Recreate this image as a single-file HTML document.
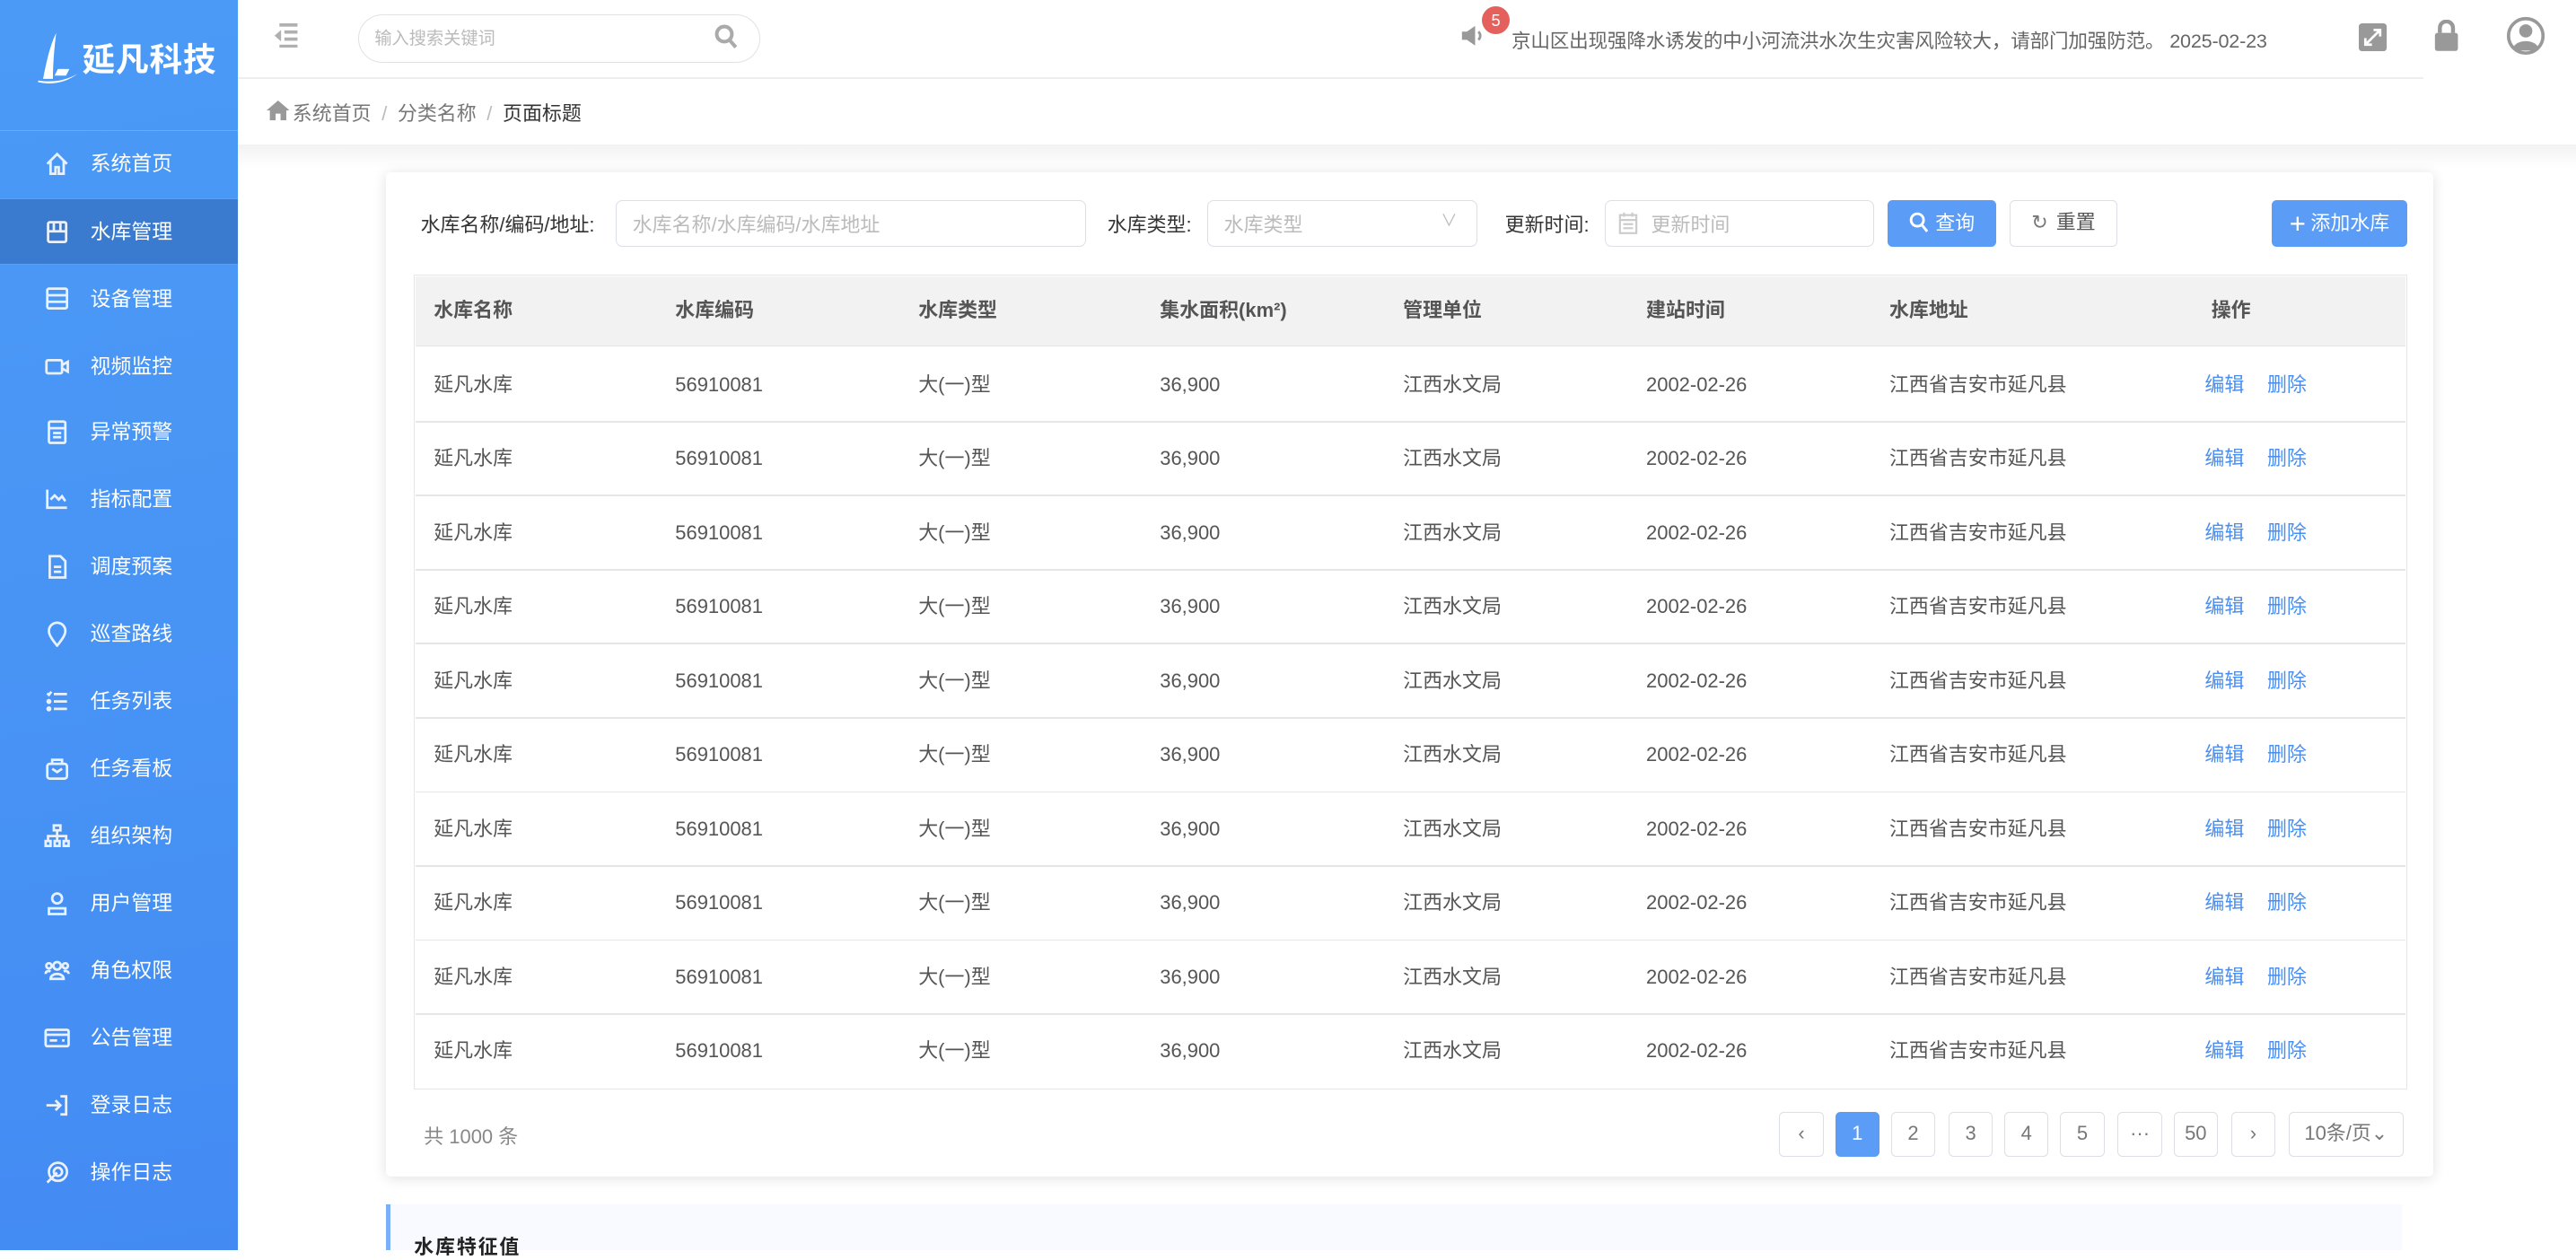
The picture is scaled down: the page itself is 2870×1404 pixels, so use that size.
<!DOCTYPE html>
<html><head><meta charset="utf-8">
<style>
html{zoom:1.8304}
*{box-sizing:border-box;margin:0;padding:0}
body{width:1568px;height:761px;overflow:hidden;background:#fff;font-family:"Liberation Sans","Noto Sans CJK SC",sans-serif;color:#333;position:relative;font-size:12px}
.a{position:absolute}
.side{left:0;top:0;width:145px;height:761px;background:linear-gradient(170deg,#4b9af6 0%,#4894f5 50%,#438bf3 100%)}
.logo{left:0;top:0;width:145px;height:80px;border-bottom:1px solid #6aabf7}
.mi{left:0;width:145px;height:40px;color:#fff;font-size:12.5px;line-height:40px}
.mi span{position:absolute;left:55px}
.mi svg{position:absolute;left:27px;top:12px;width:16px;height:16px}
.mi.on{background:#3a7bd0;border-top:1px solid #5aa0f5;border-bottom:1px solid #5aa0f5}
.box{border:1px solid #dcdfe6;border-radius:4px;background:#fff}
.ph{color:#bbb;font-size:12px}
.lab{font-size:12px;color:#333}
.btn{border-radius:3px;font-size:12px;text-align:center;line-height:28px}
.th,.td{font-size:12px;position:absolute;line-height:14px}
.th{font-weight:bold;color:#555}
.td{color:#555}
.pg{top:677px;width:27px;height:27px;border:1px solid #dcdfe6;border-radius:3px;text-align:center;line-height:25px;font-size:12px;color:#777;background:#fff}
</style></head><body>
<div class="a side">
 <div class="a logo">
  <svg class="a" style="left:20px;top:18px" width="30" height="34" viewBox="0 0 30 34"><path d="M14 2 C10 10 8 20 6 30 L12 30 C12 20 13 10 14 2Z" fill="#fff"/><path d="M3 31 C10 32 18 32 27 27 C20 32 12 34 3 32Z" fill="#fff"/><path d="M15 24 L22 24 L20 28 L13 28Z" fill="#fff"/></svg>
  <div class="a" style="left:50px;top:20px;font-size:20px;font-weight:bold;color:#fff;letter-spacing:0.5px">延凡科技</div>
 </div>
 <div class="a mi" style="top:80px"><svg viewBox="0 0 16 16" fill="none" stroke="#e8f1ff" stroke-width="1.5"><path d="M2 8 L8 2 L14 8 M4 6.5 V14 H7 V10 H9 V14 H12 V6.5"/></svg><span>系统首页</span></div>
 <div class="a mi on" style="top:121px"><svg viewBox="0 0 16 16" fill="none" stroke="#e8f1ff" stroke-width="1.5"><rect x="2.5" y="2" width="11" height="12" rx="1"/><path d="M2.5 7.5 H13.5 M6 2 V7.5 M10 2 V7.5"/></svg><span>水库管理</span></div>
 <div class="a mi" style="top:162px"><svg viewBox="0 0 16 16" fill="none" stroke="#e8f1ff" stroke-width="1.5"><rect x="2" y="2" width="12" height="12" rx="1"/><path d="M2 6 H14 M2 10 H14"/></svg><span>设备管理</span></div>
 <div class="a mi" style="top:203px"><svg viewBox="0 0 16 16" fill="none" stroke="#e8f1ff" stroke-width="1.5"><rect x="1.5" y="4" width="9.5" height="8" rx="1"/><path d="M11 7 L14.5 5 V11 L11 9"/></svg><span>视频监控</span></div>
 <div class="a mi" style="top:243px"><svg viewBox="0 0 16 16" fill="none" stroke="#e8f1ff" stroke-width="1.5"><rect x="3" y="1.5" width="10" height="13" rx="1"/><path d="M3 5.5 H13 M5.5 8.5 H10.5 M5.5 11 H10.5"/></svg><span>异常预警</span></div>
 <div class="a mi" style="top:284px"><svg viewBox="0 0 16 16" fill="none" stroke="#e8f1ff" stroke-width="1.5"><path d="M2 2 V13 H14 M4 8 L6.5 5.5 L9 8 L11 6 L13 9"/></svg><span>指标配置</span></div>
 <div class="a mi" style="top:325px"><svg viewBox="0 0 16 16" fill="none" stroke="#e8f1ff" stroke-width="1.5"><path d="M3.5 1.5 H10 L13 4.5 V14.5 H3.5Z M6 8 H10.5 M6 11 H10.5"/></svg><span>调度预案</span></div>
 <div class="a mi" style="top:366px"><svg viewBox="0 0 16 16" fill="none" stroke="#e8f1ff" stroke-width="1.5"><path d="M8 15 C4 10 3 8 3 6 A5 5 0 0 1 13 6 C13 8 12 10 8 15Z"/></svg><span>巡查路线</span></div>
 <div class="a mi" style="top:407px"><svg viewBox="0 0 16 16" fill="none" stroke="#e8f1ff" stroke-width="1.5"><path d="M6 3.5 H14 M6 8 H14 M6 12.5 H14 M2 3 L3 4 L4.5 2"/><circle cx="3" cy="8" r=".8"/><circle cx="3" cy="12.5" r=".8"/></svg><span>任务列表</span></div>
 <div class="a mi" style="top:448px"><svg viewBox="0 0 16 16" fill="none" stroke="#e8f1ff" stroke-width="1.5"><rect x="2" y="5" width="12" height="9" rx="1.5"/><path d="M5 5 V2.5 H11 V5 M5 8 L8 10 L11 8"/></svg><span>任务看板</span></div>
 <div class="a mi" style="top:489px"><svg viewBox="0 0 16 16" fill="none" stroke="#e8f1ff" stroke-width="1.5"><rect x="6" y="1.5" width="4" height="3"/><rect x="1" y="11" width="3" height="3"/><rect x="6.5" y="11" width="3" height="3"/><rect x="12" y="11" width="3" height="3"/><path d="M8 4.5 V11 M2.5 11 V8 H13.5 V11"/></svg><span>组织架构</span></div>
 <div class="a mi" style="top:530px"><svg viewBox="0 0 16 16" fill="none" stroke="#e8f1ff" stroke-width="1.5"><circle cx="8" cy="5" r="3"/><path d="M3 14.5 V11 H13 V14.5Z"/></svg><span>用户管理</span></div>
 <div class="a mi" style="top:571px"><svg viewBox="0 0 16 16" fill="none" stroke="#e8f1ff" stroke-width="1.5"><circle cx="8" cy="5" r="2.3"/><circle cx="3" cy="5" r="1.6"/><circle cx="13" cy="5" r="1.6"/><path d="M4 13 C4 9 12 9 12 13Z M1 10 C1 8 3 8 4 8.5 M15 10 C15 8 13 8 12 8.5"/></svg><span>角色权限</span></div>
 <div class="a mi" style="top:612px"><svg viewBox="0 0 16 16" fill="none" stroke="#e8f1ff" stroke-width="1.5"><rect x="1" y="3" width="14" height="10" rx="1"/><path d="M1 6 H15 M3.5 9.5 H8 M11 9.5 H12.5"/></svg><span>公告管理</span></div>
 <div class="a mi" style="top:653px"><svg viewBox="0 0 16 16" fill="none" stroke="#e8f1ff" stroke-width="1.5"><path d="M1.5 8 H10 M7 5 L10 8 L7 11 M10 2.5 H13.5 V13.5 H10"/></svg><span>登录日志</span></div>
 <div class="a mi" style="top:694px"><svg viewBox="0 0 16 16" fill="none" stroke="#e8f1ff" stroke-width="1.5"><circle cx="8.5" cy="7.5" r="5.5"/><circle cx="8.5" cy="7.5" r="2.5"/><path d="M8 8 L2 14"/></svg><span>操作日志</span></div>
</div>

<svg class="a" style="left:166px;top:14px" width="16" height="15" viewBox="0 0 16 15" fill="#b0b0b0"><rect x="4" y="0" width="11" height="2"/><rect x="7" y="4.3" width="8" height="2"/><rect x="7" y="8.6" width="8" height="2"/><rect x="4" y="13" width="11" height="2"/><path d="M5 4 L1 7.5 L5 11Z"/></svg>
<div class="a box" style="left:218px;top:9px;width:245px;height:29px;border-radius:15px;border-color:#e2e2e2"></div>
<div class="a" style="left:228px;top:15px;color:#bbb;font-size:10.5px">输入搜索关键词</div>
<svg class="a" style="left:435px;top:15px" width="15" height="16" viewBox="0 0 15 16" fill="none" stroke="#aaa" stroke-width="2.2"><circle cx="6" cy="6" r="4.6"/><path d="M9.5 10 L13 14"/></svg>
<div class="a" style="left:145px;top:47px;width:1330px;height:1px;background:#eee"></div>
<svg class="a" style="left:889px;top:15px" width="16" height="14" viewBox="0 0 16 14" fill="#999"><path d="M1 4.5 H4 L9 1 V13 L4 9.5 H1Z"/><path d="M11 4.5 C12.5 6 12.5 8 11 9.5" stroke="#999" stroke-width="1.5" fill="none"/></svg>
<div class="a" style="left:902px;top:4px;width:17px;height:17px;border-radius:50%;background:#e5605c;color:#fff;font-size:10px;text-align:center;line-height:17px">5</div>
<div class="a" style="left:920px;top:16px;font-size:11.8px;color:#666;white-space:nowrap;letter-spacing:-0.1px">京山区出现强降水诱发的中小河流洪水次生灾害风险较大，请部门加强防范。 2025-02-23</div>
<svg class="a" style="left:1436px;top:14px" width="17" height="17" viewBox="0 0 17 17"><rect x="0" y="0" width="17" height="17" rx="2" fill="#999"/><path d="M4 13 L13 4 M9 4 H13 V8 M4 9 V13 H8" stroke="#fff" stroke-width="1.5" fill="none"/></svg>
<svg class="a" style="left:1481px;top:12px" width="16" height="19" viewBox="0 0 16 19"><path d="M4 8 V5 A4 4 0 0 1 12 5 V8" stroke="#999" stroke-width="2.4" fill="none"/><rect x="1" y="8" width="14" height="11" rx="1.5" fill="#999"/></svg>
<svg class="a" style="left:1526px;top:10px" width="23" height="24" viewBox="0 0 23 24"><circle cx="11.5" cy="12" r="10.5" fill="none" stroke="#999" stroke-width="2"/><circle cx="11.5" cy="9" r="4" fill="#999"/><path d="M4 19 C6 14 17 14 19 19 L16 21 H7Z" fill="#999"/></svg>

<svg class="a" style="left:162px;top:61px" width="14" height="12" viewBox="0 0 14 12" fill="#999"><path d="M7 0 L14 6 H12 V12 H8.5 V8 H5.5 V12 H2 V6 H0Z"/></svg>
<div class="a" style="left:178px;top:60px;font-size:12px;color:#777;white-space:nowrap">系统首页 <span style="color:#bbb;margin:0 3px">/</span> 分类名称 <span style="color:#bbb;margin:0 3px">/</span> <span style="color:#333">页面标题</span></div>
<div class="a" style="left:145px;top:88px;width:1423px;height:14px;background:linear-gradient(#f2f2f2,#fff)"></div>

<div class="a" style="left:235px;top:105px;width:1246px;height:611px;background:#fff;border-radius:3px;box-shadow:0 1px 8px rgba(0,0,0,0.12)"></div>
<div class="a lab" style="left:256px;top:128px">水库名称/编码/地址:</div>
<div class="a box" style="left:375px;top:122px;width:286px;height:28px"></div>
<div class="a ph" style="left:385px;top:128px">水库名称/水库编码/水库地址</div>
<div class="a lab" style="left:674px;top:128px">水库类型:</div>
<div class="a box" style="left:735px;top:122px;width:164px;height:28px"></div>
<div class="a ph" style="left:745px;top:128px">水库类型</div>
<div class="a" style="left:877px;top:127px;color:#bbb;font-size:10px">∨</div>
<div class="a lab" style="left:916px;top:128px">更新时间:</div>
<div class="a box" style="left:977px;top:122px;width:164px;height:28px"></div>
<svg class="a" style="left:985px;top:129px" width="12" height="14" viewBox="0 0 12 14" fill="none" stroke="#ccc" stroke-width="1.2"><rect x="1" y="2" width="10" height="11"/><path d="M1 5 H11 M3.5 0.5 V3 M8.5 0.5 V3 M3 7.5 H9 M3 10 H9"/></svg>
<div class="a ph" style="left:1005px;top:128px">更新时间</div>
<div class="a btn" style="left:1149px;top:122px;width:66px;height:28px;background:#5b9cf6;color:#fff"><svg width="12" height="13" viewBox="0 0 12 13" style="vertical-align:-2px;margin-right:4px" fill="none" stroke="#fff" stroke-width="1.6"><circle cx="5" cy="5" r="3.8"/><path d="M7.8 8 L11 12"/></svg>查询</div>
<div class="a btn box" style="left:1223px;top:122px;width:66px;height:28px;line-height:26px;color:#555"><span style="color:#777;margin-right:5px">↻</span>重置</div>
<div class="a btn" style="left:1383px;top:122px;width:82px;height:28px;background:#5b9cf6;color:#fff"><span style="font-size:17px;vertical-align:-2px;margin-right:3px">+</span>添加水库</div>

<div class="a" style="left:252px;top:167px;width:1213px;height:496px;border:1px solid #e6e6e6"></div>
<div class="a" style="left:253px;top:168px;width:1211px;height:43px;background:#f2f2f2;border-bottom:1px solid #e6e6e6"></div>
<div id="tbl"></div>
<div class="a th" style="left:264px;top:182px">水库名称</div>
<div class="a th" style="left:411px;top:182px">水库编码</div>
<div class="a th" style="left:559px;top:182px">水库类型</div>
<div class="a th" style="left:706px;top:182px">集水面积(km²)</div>
<div class="a th" style="left:854px;top:182px">管理单位</div>
<div class="a th" style="left:1002px;top:182px">建站时间</div>
<div class="a th" style="left:1150px;top:182px">水库地址</div>
<div class="a th" style="left:1346px;top:182px">操作</div>
<script>
var h='';for(var i=0;i<10;i++){var y=211+i*45.1;var t=y+16;
if(i>0)h+='<div class="a" style="left:253px;top:'+y+'px;width:1211px;height:1px;background:#e6e6e6"></div>';
h+='<div class="a td" style="left:264px;top:'+t+'px">延凡水库</div><div class="a td" style="left:411px;top:'+t+'px">56910081</div><div class="a td" style="left:559px;top:'+t+'px">大(一)型</div><div class="a td" style="left:706px;top:'+t+'px">36,900</div><div class="a td" style="left:854px;top:'+t+'px">江西水文局</div><div class="a td" style="left:1002px;top:'+t+'px">2002-02-26</div><div class="a td" style="left:1150px;top:'+t+'px">江西省吉安市延凡县</div><div class="a td" style="left:1342px;top:'+t+'px;color:#4a8ef0">编辑</div><div class="a td" style="left:1380px;top:'+t+'px;color:#4a8ef0">删除</div>';}
document.getElementById('tbl').outerHTML=h;
</script>

<div class="a" style="left:258px;top:683px;font-size:12px;color:#888">共 1000 条</div>
<div class="a pg" style="left:1083px">‹</div>
<div class="a pg" style="left:1117px;background:#5b9cf6;border-color:#5b9cf6;color:#fff">1</div>
<div class="a pg" style="left:1151px">2</div>
<div class="a pg" style="left:1186px">3</div>
<div class="a pg" style="left:1220px">4</div>
<div class="a pg" style="left:1254px">5</div>
<div class="a pg" style="left:1289px">···</div>
<div class="a pg" style="left:1323px">50</div>
<div class="a pg" style="left:1358px">›</div>
<div class="a pg" style="left:1393px;width:70px">10条/页⌄</div>

<div class="a" style="left:235px;top:733px;width:1227px;height:28px;background:#f8faff;border-left:3px solid #7ab0f7"></div>
<div class="a" style="left:252px;top:750px;font-size:12px;font-weight:bold;color:#222;letter-spacing:1px">水库特征值</div>
</body></html>
